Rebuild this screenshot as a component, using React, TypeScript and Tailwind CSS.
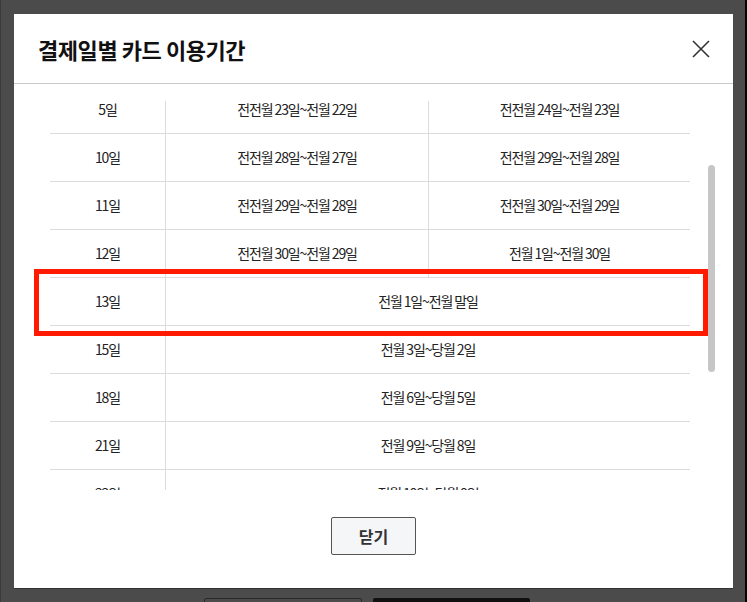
import React from "react";

const rows3: [string, string, string][] = [
  ["5일", "전전월 23일~전월 22일", "전전월 24일~전월 23일"],
  ["10일", "전전월 28일~전월 27일", "전전월 29일~전월 28일"],
  ["11일", "전전월 29일~전월 28일", "전전월 30일~전월 29일"],
  ["12일", "전전월 30일~전월 29일", "전월 1일~전월 30일"],
];

const rows2: [string, string][] = [
  ["13일", "전월 1일~전월 말일"],
  ["15일", "전월 3일~당월 2일"],
  ["18일", "전월 6일~당월 5일"],
  ["21일", "전월 9일~당월 8일"],
  ["22일", "전월 10일~당월 9일"],
];

export default function App() {
  return (
    <div className="relative w-[747px] h-[602px] overflow-hidden bg-[#4b4b4b] border-l border-l-[#3a3a3a] border-r-2 border-r-black pl-[13px] pt-[14px] font-['Noto_Sans_CJK_KR','Noto_Sans',sans-serif] text-[#222]">
      {/* dimmed page buttons behind the overlay */}
      <div className="absolute left-[203px] top-[598px] w-[158px] h-[10px] border border-[#2a2a2a] rounded-t-[2px]" />
      <div className="absolute left-[372px] top-[598px] w-[157px] h-[10px] bg-[#101010] rounded-t-[2px]" />

      <div className="relative w-[719px] h-[574px] bg-white flex flex-col shadow-[0_1px_0_#333]">
        <div className="h-[70px] shrink-0 border-b border-[#c9c9c9] flex items-center justify-between pl-[24px] pr-[23px]">
          <h1 className="text-[22px] font-bold tracking-[-0.02em] text-[#111] leading-none">결제일별 카드 이용기간</h1>
          <svg width="18" height="18" viewBox="0 0 18 18" className="block">
            <path d="M1 1 L17 17 M17 1 L1 17" stroke="#333" strokeWidth="1.6" fill="none" />
          </svg>
        </div>

        <div className="pt-[17px] relative">
          <div className="ml-[36px] w-[640px] h-[389px] overflow-hidden">
            <div className="-mt-[15px] text-[14px] tracking-[-0.08em]">
              {rows3.map((r) => (
                <div key={r[0]} className="flex h-[48px] border-b border-[#dcdcdc]">
                  <div className="w-[116px] border-r border-[#dcdcdc] flex items-center justify-center">{r[0]}</div>
                  <div className="w-[263px] border-r border-[#dcdcdc] flex items-center justify-center">{r[1]}</div>
                  <div className="w-[261px] flex items-center justify-center">{r[2]}</div>
                </div>
              ))}
              {rows2.map((r) => (
                <div key={r[0]} className="flex h-[48px] border-b border-[#dcdcdc]">
                  <div className="w-[116px] border-r border-[#dcdcdc] flex items-center justify-center">{r[0]}</div>
                  <div className="flex-1 flex items-center justify-center">{r[1]}</div>
                </div>
              ))}
            </div>
          </div>
          <div className="absolute left-[694px] top-[81px] w-[7px] h-[207px] rounded-full bg-[#c6c6c6]" />
        </div>

        <div className="flex justify-center mt-[27px]">
          <button className="w-[85px] h-[38px] bg-[#f5f6f8] border border-[#555] rounded-[2px] text-[16px] font-bold text-[#333]">
            닫기
          </button>
        </div>
      </div>

      {/* annotation highlight */}
      <div className="absolute left-[33px] top-[269px] w-[674px] h-[67px] border-[5px] border-[#ff1a00]" />
    </div>
  );
}
